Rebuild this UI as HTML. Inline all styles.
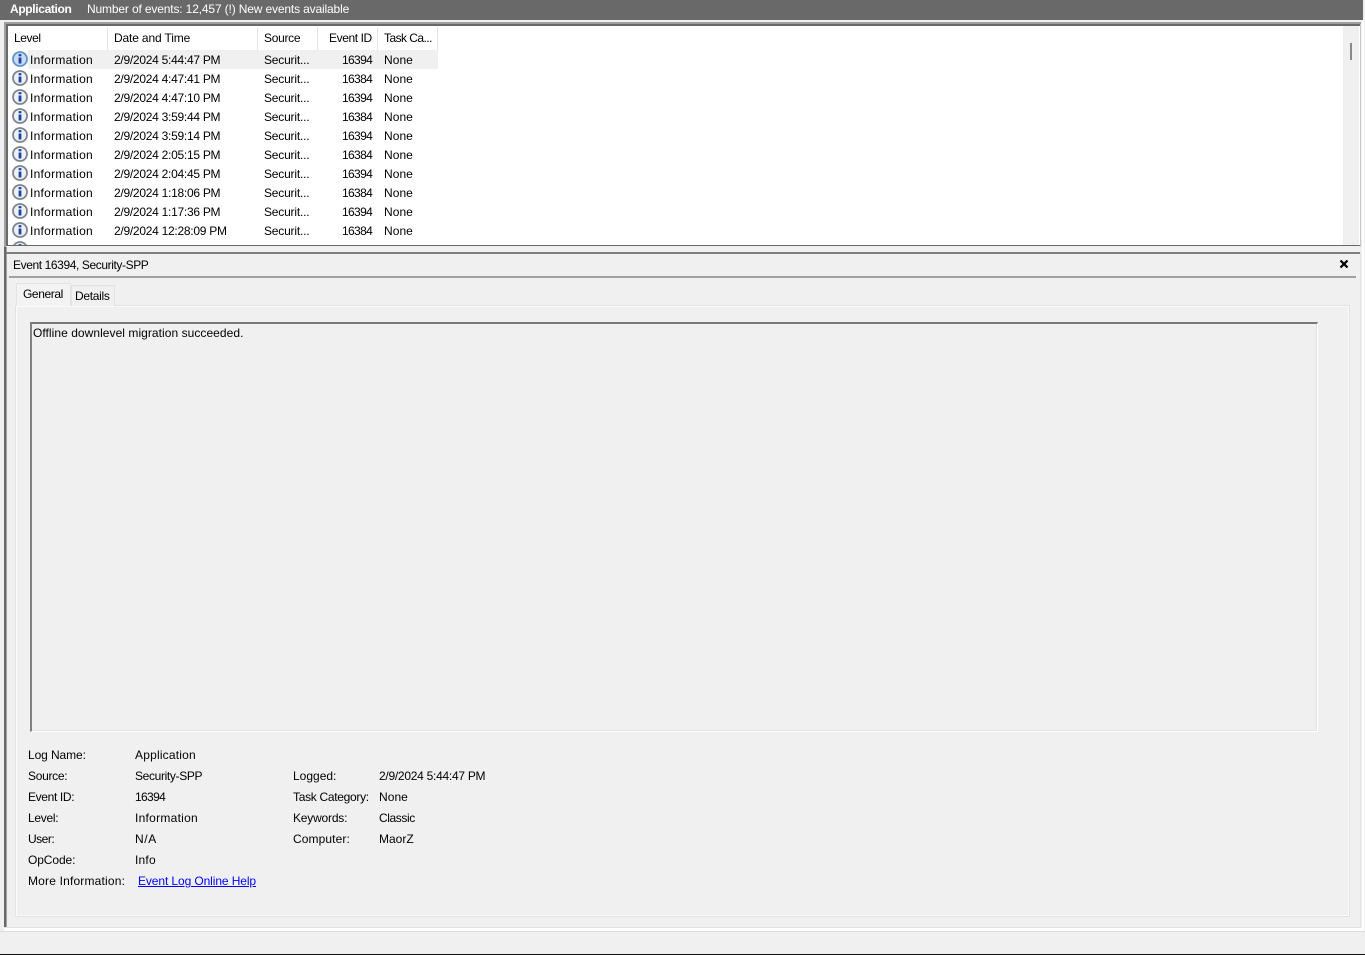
<!DOCTYPE html>
<html><head><meta charset="utf-8"><style>
html,body{margin:0;padding:0;width:1365px;height:955px;overflow:hidden;background:#f0f0f0}
body{position:relative;font-family:"Liberation Sans",sans-serif;font-size:12px;color:#000}
div,a,svg{position:absolute;white-space:nowrap}
.r{height:19px;line-height:19px;left:0}
.t{height:16px;line-height:16px}
.a{left:30px;letter-spacing:.27px}
.b{left:114px;letter-spacing:-.27px}
.c{left:264px;letter-spacing:-.2px}
.e{left:342px;letter-spacing:-.65px}
.f{left:384px;letter-spacing:.05px}
</style></head><body>
<div style="left:0;top:0;width:1363px;height:20px;background:#696969"></div>
<div class="t" style="left:10px;top:1px;color:#fff;font-weight:bold;letter-spacing:-.35px">Application</div>
<div class="t" style="left:87px;top:1px;color:#fff;letter-spacing:-.15px">Number of events: 12,457 (!) New events available</div>

<div style="left:4px;top:22px;width:1357px;height:2px;background:#a0a0a0"></div>
<div style="left:4px;top:22px;width:2px;height:225px;background:#a0a0a0"></div>
<div style="left:6px;top:24px;width:1355px;height:222px;box-sizing:border-box;border-style:solid;border-color:#696969;border-width:2px 1px 1px 2px;background:#fff"></div>
<div style="left:1360px;top:24px;width:1px;height:223px;background:#c8c8c8"></div>
<div style="left:1343px;top:26px;width:16px;height:219px;background:#f0f0f0"></div>
<div style="left:1350px;top:43px;width:2px;height:17px;background:#8a8a8a"></div>

<div style="left:107px;top:27px;width:1px;height:23px;background:#e5e5e5"></div>
<div style="left:257px;top:27px;width:1px;height:23px;background:#e5e5e5"></div>
<div style="left:317px;top:27px;width:1px;height:23px;background:#e5e5e5"></div>
<div style="left:377px;top:27px;width:1px;height:23px;background:#e5e5e5"></div>
<div style="left:437px;top:27px;width:1px;height:23px;background:#e5e5e5"></div>
<div class="t" style="left:14px;top:30px;letter-spacing:-.4px">Level</div>
<div class="t" style="left:114px;top:30px;letter-spacing:-.15px">Date and Time</div>
<div class="t" style="left:264px;top:30px;letter-spacing:-.3px">Source</div>
<div class="t" style="left:329px;top:30px;letter-spacing:-.4px">Event ID</div>
<div class="t" style="left:384px;top:30px;letter-spacing:-.55px">Task Ca...</div>

<div style="left:28px;top:50px;width:410px;height:19px;background:#f0f0f0"></div>

<svg style="left:0;top:0" width="30" height="246" viewBox="0 0 30 246">
<defs><clipPath id="c"><rect x="8" y="26" width="22" height="219"/></clipPath></defs>
<g clip-path="url(#c)"><g transform="translate(0 .5)">
<circle cx="20" cy="58.500" r="7" fill="#c9dcf2" stroke="#5f93cf" stroke-width="1.800"/>
<g fill="#edf1f7" stroke="#7f848c" stroke-width="1.800">
<circle cx="20" cy="77.500" r="7"/><circle cx="20" cy="96.500" r="7"/><circle cx="20" cy="115.500" r="7"/><circle cx="20" cy="134.500" r="7"/><circle cx="20" cy="153.500" r="7"/><circle cx="20" cy="172.500" r="7"/><circle cx="20" cy="191.500" r="7"/><circle cx="20" cy="210.500" r="7"/><circle cx="20" cy="229.500" r="7"/><circle cx="20" cy="248.500" r="7"/>
</g>
<g fill="#1a46a0">
<rect x="18.600" y="57" width="2.800" height="6"/><rect x="18.600" y="53.600" width="2.800" height="2.200"/>
<rect x="18.600" y="76" width="2.800" height="6"/><rect x="18.600" y="72.600" width="2.800" height="2.200"/>
<rect x="18.600" y="95" width="2.800" height="6"/><rect x="18.600" y="91.600" width="2.800" height="2.200"/>
<rect x="18.600" y="114" width="2.800" height="6"/><rect x="18.600" y="110.600" width="2.800" height="2.200"/>
<rect x="18.600" y="133" width="2.800" height="6"/><rect x="18.600" y="129.600" width="2.800" height="2.200"/>
<rect x="18.600" y="152" width="2.800" height="6"/><rect x="18.600" y="148.600" width="2.800" height="2.200"/>
<rect x="18.600" y="171" width="2.800" height="6"/><rect x="18.600" y="167.600" width="2.800" height="2.200"/>
<rect x="18.600" y="190" width="2.800" height="6"/><rect x="18.600" y="186.600" width="2.800" height="2.200"/>
<rect x="18.600" y="209" width="2.800" height="6"/><rect x="18.600" y="205.600" width="2.800" height="2.200"/>
<rect x="18.600" y="228" width="2.800" height="6"/><rect x="18.600" y="224.600" width="2.800" height="2.200"/>
<rect x="18.600" y="243.600" width="2.800" height="2.200"/>
</g>
</g></g>
</svg>

<div class="r" style="top:51px"><div class="a">Information</div><div class="b">2/9/2024 5:44:47 PM</div><div class="c">Securit...</div><div class="e">16394</div><div class="f">None</div></div>
<div class="r" style="top:70px"><div class="a">Information</div><div class="b">2/9/2024 4:47:41 PM</div><div class="c">Securit...</div><div class="e">16384</div><div class="f">None</div></div>
<div class="r" style="top:89px"><div class="a">Information</div><div class="b">2/9/2024 4:47:10 PM</div><div class="c">Securit...</div><div class="e">16394</div><div class="f">None</div></div>
<div class="r" style="top:108px"><div class="a">Information</div><div class="b">2/9/2024 3:59:44 PM</div><div class="c">Securit...</div><div class="e">16384</div><div class="f">None</div></div>
<div class="r" style="top:127px"><div class="a">Information</div><div class="b">2/9/2024 3:59:14 PM</div><div class="c">Securit...</div><div class="e">16394</div><div class="f">None</div></div>
<div class="r" style="top:146px"><div class="a">Information</div><div class="b">2/9/2024 2:05:15 PM</div><div class="c">Securit...</div><div class="e">16384</div><div class="f">None</div></div>
<div class="r" style="top:165px"><div class="a">Information</div><div class="b">2/9/2024 2:04:45 PM</div><div class="c">Securit...</div><div class="e">16394</div><div class="f">None</div></div>
<div class="r" style="top:184px"><div class="a">Information</div><div class="b">2/9/2024 1:18:06 PM</div><div class="c">Securit...</div><div class="e">16384</div><div class="f">None</div></div>
<div class="r" style="top:203px"><div class="a">Information</div><div class="b">2/9/2024 1:17:36 PM</div><div class="c">Securit...</div><div class="e">16394</div><div class="f">None</div></div>
<div class="r" style="top:222px"><div class="a">Information</div><div class="b">2/9/2024 12:28:09 PM</div><div class="c">Securit...</div><div class="e">16384</div><div class="f">None</div></div>

<!-- Detail pane frame -->
<div style="left:4px;top:247px;width:2px;height:682px;background:#696969"></div>
<div style="left:6px;top:247px;width:1px;height:682px;background:#a0a0a0"></div>
<div style="left:6px;top:252px;width:1354px;height:2px;background:#808080"></div>
<div style="left:1360px;top:252px;width:1px;height:677px;background:#e3e3e3"></div>
<div style="left:1362px;top:20px;width:2px;height:912px;background:#fff"></div>
<div style="left:4px;top:927px;width:1357px;height:1px;background:#e3e3e3"></div>
<div style="left:4px;top:928px;width:1360px;height:3px;background:#fff"></div>
<div style="left:0;top:931px;width:1365px;height:1px;background:#dcdcdc"></div>
<div style="left:0;top:954px;width:1365px;height:1px;background:#111"></div>

<div class="t" style="left:13px;top:257px;letter-spacing:-.4px">Event 16394, Security-SPP</div>
<svg style="left:1339px;top:259px" width="10" height="10" viewBox="0 0 10 10"><path d="M1.500 1.500 8.500 8.500M8.500 1.500 1.500 8.500" stroke="#000" stroke-width="2.200" fill="none"/></svg>
<div style="left:9px;top:276px;width:1347px;height:2px;background:#a0a0a0"></div>

<!-- Tab page -->
<div style="left:15px;top:305px;width:1335px;height:612px;box-sizing:border-box;border:1px solid #e3e3e3;background:#f0f0f0"></div>
<div style="left:16px;top:306px;width:1333px;height:610px;box-sizing:border-box;border:1px solid #fafafa;"></div>
<div style="left:71px;top:285px;width:44px;height:21px;box-sizing:border-box;border:1px solid #e3e3e3;border-bottom:0;background:#f0f0f0"></div>
<div class="t" style="left:75px;top:288px;letter-spacing:-.3px">Details</div>
<div style="left:16px;top:283px;width:55px;height:23px;box-sizing:border-box;border:1px solid #e3e3e3;border-bottom:0;background:#f3f3f3"></div>
<div class="t" style="left:23px;top:286px;letter-spacing:-.4px">General</div>

<!-- Message box -->
<div style="left:30px;top:322px;width:1288px;height:410px;box-sizing:border-box;border-top:2px solid #7a7a7a;border-left:2px solid #808080;border-right:1px solid #fff;border-bottom:1px solid #fff;box-shadow:inset -1px -1px 0 #e3e3e3"></div>
<div class="t" style="left:33px;top:325px;letter-spacing:.05px">Offline downlevel migration succeeded.</div>

<!-- Properties -->
<div class="t" style="left:28px;top:747px;letter-spacing:-.1px">Log Name:</div><div class="t" style="left:135px;top:747px;letter-spacing:.2px">Application</div>
<div class="t" style="left:28px;top:768px;letter-spacing:-.3px">Source:</div><div class="t" style="left:135px;top:768px;letter-spacing:-.35px">Security-SPP</div>
<div class="t" style="left:293px;top:768px">Logged:</div><div class="t" style="left:379px;top:768px;letter-spacing:-.27px">2/9/2024 5:44:47 PM</div>
<div class="t" style="left:28px;top:789px;letter-spacing:-.35px">Event ID:</div><div class="t" style="left:135px;top:789px;letter-spacing:-.65px">16394</div>
<div class="t" style="left:293px;top:789px;letter-spacing:-.3px">Task Category:</div><div class="t" style="left:379px;top:789px;letter-spacing:.05px">None</div>
<div class="t" style="left:28px;top:810px;letter-spacing:-.3px">Level:</div><div class="t" style="left:135px;top:810px;letter-spacing:.27px">Information</div>
<div class="t" style="left:293px;top:810px;letter-spacing:-.2px">Keywords:</div><div class="t" style="left:379px;top:810px;letter-spacing:-.4px">Classic</div>
<div class="t" style="left:28px;top:831px;letter-spacing:-.5px">User:</div><div class="t" style="left:135px;top:831px;letter-spacing:.6px">N/A</div>
<div class="t" style="left:293px;top:831px;letter-spacing:.1px">Computer:</div><div class="t" style="left:379px;top:831px">MaorZ</div>
<div class="t" style="left:28px;top:852px;letter-spacing:-.1px">OpCode:</div><div class="t" style="left:135px;top:852px;letter-spacing:.2px">Info</div>
<div class="t" style="left:28px;top:873px;letter-spacing:.18px">More Information:</div>
<a class="t" href="#" style="left:138px;top:873px;color:#0000ff;text-decoration:underline;letter-spacing:-.1px">Event Log Online Help</a>
</body></html>
